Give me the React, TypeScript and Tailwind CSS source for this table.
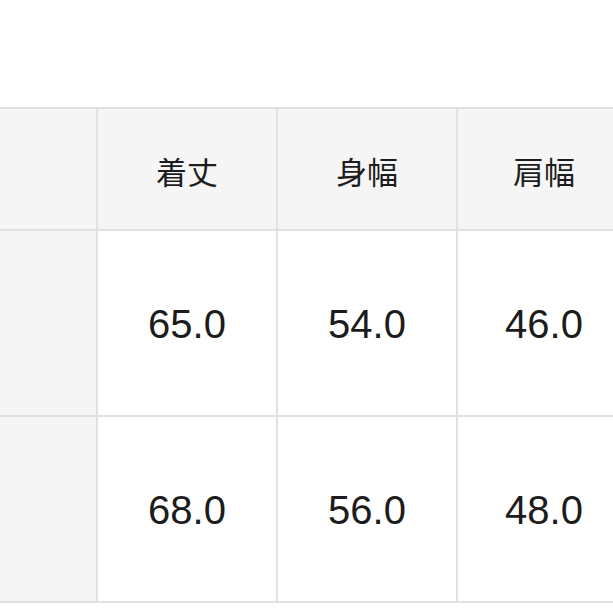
import React from "react";

const headers = ["着丈", "身幅", "肩幅"];
const rows = [
  ["65.0", "54.0", "46.0"],
  ["68.0", "56.0", "48.0"],
];

export default function App() {
  return (
    <div className="w-[613px] h-[613px] overflow-hidden bg-white pt-[107px]" style={{ fontFamily: '"Liberation Sans", "Noto Sans CJK JP", sans-serif' }}>
      <div className="w-[640px] grid grid-cols-[96px_178px_178px_172px] grid-rows-[120px_184px_184px] gap-[2px] py-[2px] bg-[#dfe2e5] text-[#1c1c1c]">
        <div className="bg-[#f5f5f5]" />
        {headers.map((h) => (
          <div key={h} className="bg-[#f5f5f5] flex items-center justify-center pt-[4px] text-[31px]" style={{ fontFamily: '"Noto Sans CJK JP", sans-serif' }}>
            {h}
          </div>
        ))}
        {rows.map((r, i) => (
          <React.Fragment key={i}>
            <div className="bg-[#f5f5f5]" />
            {r.map((v, j) => (
              <div key={j} className="bg-white flex items-center justify-center text-[40px] pt-[2px]">
                {v}
              </div>
            ))}
          </React.Fragment>
        ))}
      </div>
    </div>
  );
}
